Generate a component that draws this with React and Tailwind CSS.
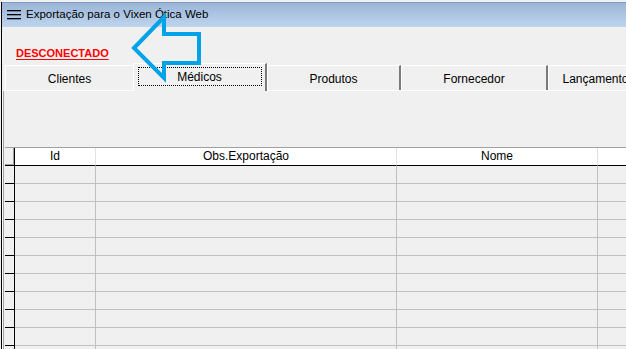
import React from "react";

const rows = Array.from({ length: 11 });

function Tab({ label, w, noRight }) {
  return (
    <div
      className={`${w} h-[25px] shrink-0 border-t border-l border-white ${noRight ? "" : "border-r-2 border-r-[#7a7a7a]"} flex items-center justify-center pt-[2px] text-[12px] text-black leading-none`}
    >
      <span className="whitespace-nowrap">{label}</span>
    </div>
  );
}

export default function App() {
  return (
    <div className="relative w-[626px] h-[349px] overflow-hidden bg-[#f0f0f0] font-['Liberation_Sans',Arial,sans-serif]">
      <div className="h-[2px] bg-[#f0f0f0]" />
      <div className="ml-[1px] h-[347px] border-l border-black flex flex-col">
        {/* title bar */}
        <div className="h-[25px] shrink-0 border-t border-[#7f9cc0] bg-gradient-to-b from-[#9ab5d6] to-[#bfd5ee] flex items-center">
          <svg width="14" height="10" viewBox="0 0 14 10" className="ml-[5px] shrink-0">
            <rect x="0" y="0" width="14" height="1.3" fill="#000" />
            <rect x="0" y="4" width="14" height="1.3" fill="#000" />
            <rect x="0" y="8" width="14" height="1.3" fill="#000" />
          </svg>
          <span className="ml-[5px] text-[11.5px] text-black whitespace-nowrap">
            Exportação para o Vixen Ótica Web
          </span>
        </div>

        {/* status */}
        <div className="h-[36px] shrink-0 pl-[14px] pt-[13px]">
          <span className="text-[11px] leading-[13px] font-bold text-[#ff0000] underline underline-offset-[2px]">
            DESCONECTADO
          </span>
        </div>

        {/* tabs */}
        <div className="h-[27px] shrink-0 flex items-end pl-[3px]">
          <Tab label="Clientes" w="w-[128px]" noRight />
          <div className="relative z-10 -mb-[1px] w-[134px] h-[28px] shrink-0 bg-[#f0f0f0] border-t border-l border-white border-r-2 border-r-[#7a7a7a] flex items-start justify-center pt-[3px]">
            <div className="w-[124px] h-[19px] border border-dotted border-black flex items-center justify-center text-[12px] text-black leading-none">
              Médicos
            </div>
          </div>
          <Tab label="Produtos" w="w-[134px]" />
          <Tab label="Fornecedor" w="w-[147px]" />
          <Tab label="Lançamentos" w="w-[102px]" />
        </div>

        {/* page */}
        <div className="flex-1 border-t border-white flex">
          <div className="w-[1px] bg-white" />
          <div className="w-[1px] bg-[#a0a0a0]" />
          <div className="w-[1px]" />
          <div className="flex-1 flex flex-col">
            <div className="h-[56px] shrink-0" />
            <div className="border-t border-[#a0a0a0] grid grid-cols-[10px_81px_301px_201px_1fr] text-[12px] text-black">
              {/* header */}
              <div className="h-[18px] bg-[#f0f0f0] border-r border-black border-b border-b-black shadow-[inset_-1px_-1px_0_#a0a0a0]" />
              <div className="h-[18px] bg-white border-r border-[#e3e3e3] border-b border-b-black text-center leading-[17px]">Id</div>
              <div className="h-[18px] bg-white border-r border-[#e3e3e3] border-b border-b-black text-center leading-[17px]">Obs.Exportação</div>
              <div className="h-[18px] bg-white border-r border-[#e3e3e3] border-b border-b-black text-center leading-[17px]">Nome</div>
              <div className="h-[18px] bg-white border-b border-b-black" />
              {rows.map((_, i) => (
                <React.Fragment key={i}>
                  <div className="h-[18px] border-r border-black border-b border-b-black" />
                  <div className="h-[18px] border-r border-b border-[#c0c0c0]" />
                  <div className="h-[18px] border-r border-b border-[#c0c0c0]" />
                  <div className="h-[18px] border-r border-b border-[#c0c0c0]" />
                  <div className="h-[18px] border-b border-[#c0c0c0]" />
                </React.Fragment>
              ))}
            </div>
          </div>
        </div>
      </div>

      {/* annotation arrow overlay */}
      <svg
        className="absolute left-0 top-0 z-20 pointer-events-none"
        width="626"
        height="349"
        viewBox="0 0 626 349"
      >
        <polygon
          points="134,48 164,17 164,34 199,34 199,63 164,63 164,78"
          fill="none"
          stroke="#00a2e8"
          strokeWidth="4"
          strokeLinejoin="miter"
        />
      </svg>
    </div>
  );
}
